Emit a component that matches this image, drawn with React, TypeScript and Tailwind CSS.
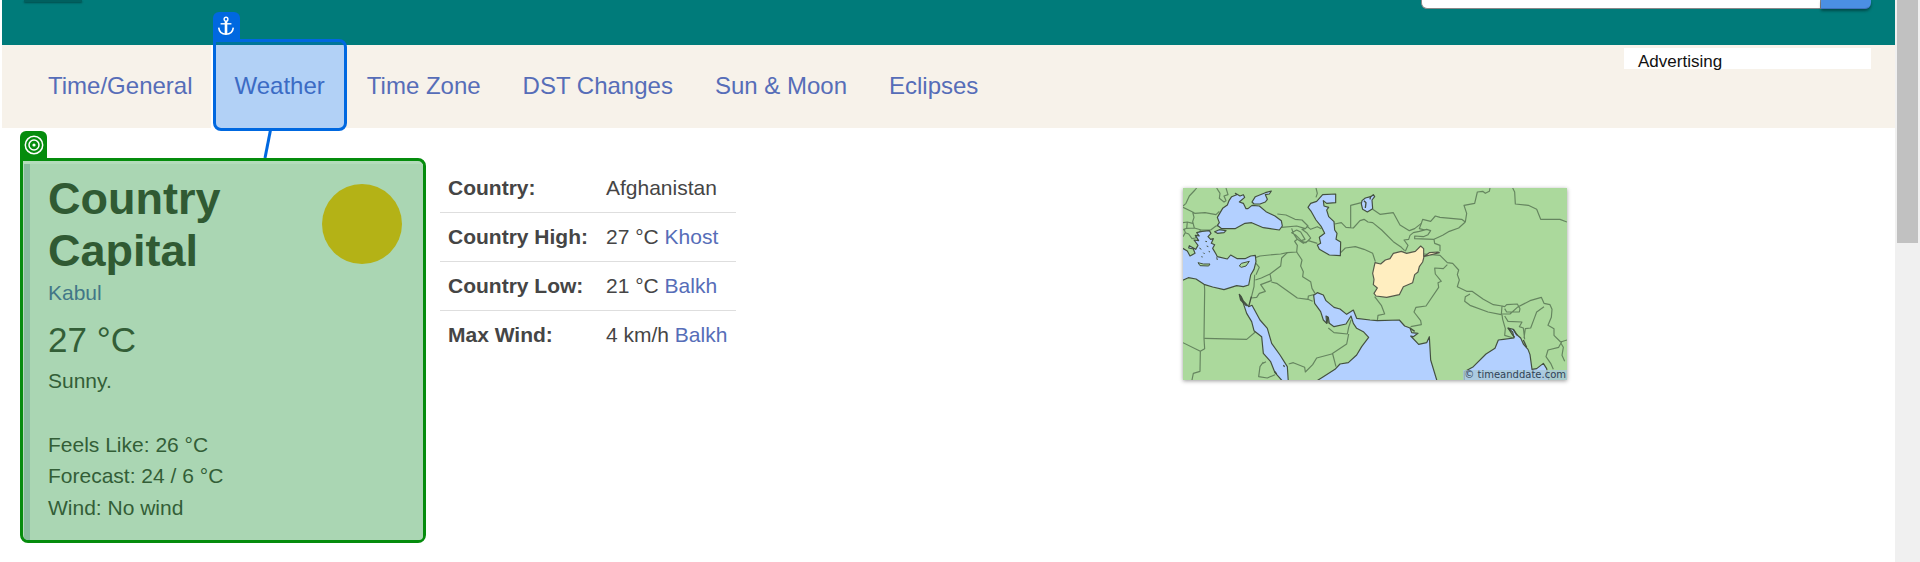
const tabs = ["Time/General", "Weather", "Time Zone", "DST Changes", "Sun & Moon", "Eclipses"];

const facts = [
  { label: "Country:", value: "Afghanistan", link: "" },
  { label: "Country High:", value: "27 °C", link: "Khost" },
  { label: "Country Low:", value: "21 °C", link: "Balkh" },
  { label: "Max Wind:", value: "4 km/h", link: "Balkh" },
];

function AnchorIcon() {
  return (
    <svg viewBox="0 0 18 20" className="h-5 w-[18px]" fill="none" stroke="white" aria-hidden="true">
      <circle cx="9" cy="3.2" r="1.9" strokeWidth="1.4" />
      <path d="M9 5v13" strokeWidth="2.6" />
      <path d="M3.6 7.8h10.8" strokeWidth="1.4" />
      <path d="M1.7 11.6C2.2 15.6 5 18.2 9 18.2s6.800-2.600 7.300-6.600" strokeWidth="1.600" />
    </svg>
  );
}

function TargetIcon() {
  return (
    <svg viewBox="0 0 20 20" className="size-5" fill="none" stroke="white" strokeWidth="1.5" aria-hidden="true">
      <circle cx="10" cy="10" r="8.700" />
      <circle cx="10" cy="10" r="5" />
      <circle cx="10" cy="10" r="1.600" fill="white" stroke="none" />
    </svg>
  );
}

function RegionMap() {
  return (
    <svg viewBox="9 24 1152 576" className="block w-full" role="img" aria-label="Location of Afghanistan">
      <rect x="9" y="24" width="1152" height="576" fill="#abd99c" />
      <g fill="none" stroke="#65855f" strokeWidth="3.500" strokeLinejoin="round">
        <path d="M9 78L18 70L28 48L45 30L50 24M9 82L38 96L44 100L75 98L108 104L118 94M110 24L120 40L118 55L132 66L138 62L132 48L144 44L138 24M38 96L42 112L38 125L43 144L64 150L92 150L108 138L116 138M9 128L22 126L38 130M9 150L20 145L43 144M9 170L16 158L26 162L36 176L46 174L62 150M22 126L20 145M16 158L12 146" />
        <path d="M408 24L412 40L408 52M292 102L318 105L345 118L366 120L384 138L376 146L350 138L305 142M335 145L340 160L352 178L344 184L352 196L350 216L322 218L302 222L268 225L240 228L228 232M335 158L350 150L362 156L375 178L364 182L348 166ZM376 146L366 148L380 158L392 174L378 188L364 184M380 138L392 148L412 140L424 146M352 178L370 190L385 182L412 190" />
        <path d="M350 216L366 240L362 258L370 275L368 290L392 305L396 325L405 340M322 218L305 234L302 258L270 282L244 294L226 300M228 250L238 262L228 284M224 284L222 320L214 352M270 282L274 302L242 314L256 334L238 340L230 352L214 354M274 306L290 310L352 354L384 358M384 358L385 348L402 344M384 358L398 364" />
        <path d="M73 314L74 330L72 475L74 506L61 514L9 488M74 475L200 478L226 456M61 514L60 574L40 580L36 600M445 444L462 458L502 462L506 442L513 420M506 462L500 492L455 522L410 534L398 554L376 576L374 562L340 548L326 552M458 522L468 560M250 546L240 560L236 590L262 594L285 584M245 552L258 545" />
        <path d="M464 132L484 128L498 142L520 144L540 122L552 118L564 126L578 128L605 150L640 185L664 202L674 212M512 143V76L544 68M482 218L496 204L526 200L552 208L578 220L586 245M578 88L600 103L640 98L660 135L688 152L704 146L724 130L728 118L752 124L766 108L780 112L845 118L856 126" />
        <path d="M856 126L836 144L808 154L788 166L762 178L704 176L704 168L730 170L744 164L752 152L740 148L718 154L700 158L690 166L686 178L672 180L684 196L676 214M724 130L718 146L735 150M762 178L764 190L780 196L780 214M856 126L860 100L852 76L884 70L892 36L908 34L916 40L928 34L930 24M998 24L1004 36L1006 72L1045 76L1070 88L1082 118L1140 118L1161 126" />
        <path d="M732 222L780 226L802 248L818 250L836 270L832 284L838 300L832 320L860 334L876 334L910 358L940 374L966 378L964 404L924 396L870 376L854 364L856 350L870 342M802 254L790 266L764 264L766 282L784 304L774 308L776 322L738 378L708 382L702 396L722 422L724 434L692 440M584 350L604 376L614 402L594 406L592 422M966 378L974 380L980 374L1012 372L1020 386L1018 396L980 396L974 386M966 402L990 402L1012 382L1050 362L1084 352L1092 370L1110 374L1116 388L1114 412L1104 436L1122 446L1122 466L1142 486L1161 480" />
        <path d="M966 404L968 418L976 446L974 466L1000 474M974 408L984 424L1026 426L1018 440L1030 444L1034 478M1092 380L1070 396L1064 412L1052 444L1036 446L1032 474M1146 484L1136 502L1104 510L1098 530L1112 550L1120 568M1142 488L1150 502L1146 526L1154 544" />
      </g>
      <g fill="#b3d0ff" stroke="#43503f" strokeWidth="3.500" strokeLinejoin="round">
        <path d="M5 203L22 213L30 228L45 220L40 207L26 204L28 197L47 208L54 196L42 180L56 182L46 166L58 168L50 158L66 154L88 152L93 160L84 170L92 178L100 176L94 190L104 194L98 205L108 222L112 230L142 237L152 225L172 236L195 236L212 228L226 226L228 245L222 268L212 285L206 315L190 320L170 317L132 329L98 321L72 313L48 297L25 293L5 302Z" />
        <path d="M104 155L118 149L138 152L132 158L112 160Z" />
        <path d="M170 44L155 50L147 62L142 75L128 85L112 112L118 128L112 136L125 146L165 146L195 130L215 128L250 143L298 150L307 138L304 122L285 108L258 95L238 78L216 76L204 86L198 86L190 70L178 66L194 52L190 44L180 48L166 40Z" />
        <path d="M216 66L226 50L256 38L274 33L268 42L256 44L262 58L256 66L240 72L222 72Z" />
        <path d="M467 42V68L440 70L430 62L432 78L446 82L440 90L446 110L462 125L464 150L471 160L468 178L482 186L481 227L448 225L418 208L412 195L422 190L418 172L434 160L424 140L408 120L394 95L384 82L392 70L410 64L428 44Z" />
        <path d="M546 62L556 54L572 50L580 44L584 50L576 60L578 86L562 96L548 88L544 72Z" />
        <path d="M178 343L184 350L190 363L206 380L216 376L225 392L240 420L262 445L275 490L300 525L322 560L325 606H310L285 578L272 545L250 520L245 470L222 452L215 425L200 400L190 370Z" />
        <path d="M401 346L412 338L430 345L438 362L462 382L480 387L500 403L520 390L530 415L570 420L592 422L658 420L674 438L690 444L695 458L714 460L700 470L692 468L716 493L740 488L748 470L752 540L772 606H405L430 590L465 568L480 552L505 548L530 525L545 500L566 472L550 455L530 445L520 430L513 408L498 432L462 440L448 430L445 412L438 408L440 430L430 420L422 395L404 370Z" />
        <path d="M853 606V575L880 560L918 522L945 505L955 480L970 478L1002 474L998 456L984 444L1000 448L1008 462L1022 474L1030 492L1044 508L1050 524L1056 568L1070 566L1090 550L1100 566L1107 606Z" />
      </g>
      <g fill="#abd99c" stroke="#43503f" strokeWidth="3" strokeLinejoin="round">
        <path d="M54 248L70 252L90 252L86 258L60 257Z" />
        <path d="M178 258L184 250L208 244L198 258L184 262Z" />
        <path d="M58 204L64 208M70 218L74 222M80 198L85 200M76 184L81 185M86 214L90 216M64 230L68 231M110 232L112 240" fill="none" />
        <path d="M552 62L558 68L556 84M572 48L570 58M178 343L182 360L200 378M206 380L214 350M442 410L444 430" fill="none" strokeWidth="4" />
        <path d="M984 444L996 462L1004 472M1000 448L1012 466M1030 480L1040 502M310 556L314 560M690 444L704 454M284 574L290 582" fill="none" strokeWidth="4" />
      </g>
      <path
        d="M585 248L602 252L616 240L630 236L640 220L664 214L680 220L706 214L722 198L731 206V230L778 218L774 216L748 218L732 230L728 246L718 260L714 276L704 284L698 308L670 320L658 344L620 352L588 348L582 340L592 324L580 314L582 298L578 280Z"
        fill="#ffeec0"
        stroke="#55594a"
        strokeWidth="3.500"
        strokeLinejoin="round"
      />
    </svg>
  );
}

export default function App() {
  return (
    <div className="flex min-h-screen bg-white font-['Liberation_Sans',Arial,sans-serif] text-[21px] leading-[31px] text-[#454545]">
      <div className="min-w-0 flex-1 pl-0.5">
        <header className="flex h-[45px] items-start justify-between bg-[#007b7a] pr-6 pl-[22px]">
          <div className="h-0.5 w-[58px] bg-[#00605f] shadow-[0_1px_2px_#004b4a]" />
          <form className="flex h-[9px] w-[450px]" onSubmit={(e) => e.preventDefault()}>
            <input
              type="search"
              aria-label="Search"
              className="min-w-0 flex-1 rounded-bl-md border border-t-0 border-[#888] bg-white outline-none"
            />
            <button
              type="submit"
              aria-label="Submit search"
              className="w-[50px] rounded-br-md border-b border-[#3f73bd] bg-[#4b8fe3] shadow-[0_2px_3px_rgba(0,0,0,0.4)]"
            />
          </form>
        </header>

        <div className="flex h-[83px] items-start justify-between bg-[#f7f2ea] pr-6 pl-[25px]">
          <nav className="flex h-full text-2xl text-[#566db8]">
            {tabs.map((tab) => (
              <div
                key={tab}
                className={
                  tab === "Weather"
                    ? "relative -ml-[3px] flex h-full items-center bg-white pr-[21px] pl-6"
                    : "flex h-full items-center px-[21px]"
                }
              >
                <a href="#" className="whitespace-nowrap pb-0.5">
                  {tab}
                </a>
                {tab === "Weather" && (
                  <div className="absolute -top-1.5 -right-px -bottom-[3px] left-0.5 z-10 rounded-lg rounded-tl-none border-[3px] border-[#0068e0] bg-[#0068e0]/30">
                    <span className="absolute -top-[30px] -left-[3px] flex h-7 w-[27px] items-center justify-center rounded-t-md bg-[#0068e0]">
                      <AnchorIcon />
                    </span>
                    <svg viewBox="0 0 10 28" className="absolute top-[88px] left-[46px] h-7 w-2.5" aria-hidden="true">
                      <path d="M8.500 0L3 28" stroke="#0068e0" strokeWidth="3" />
                    </svg>
                  </div>
                )}
              </div>
            ))}
          </nav>
          <div className="mt-[3px] h-[21px] w-[247px] bg-white pl-3.5 text-[17px] leading-[27px] text-[#111]">Advertising</div>
        </div>

        <main className="flex items-start pt-[30px] pr-6 pl-[18px]">
          <section className="relative w-[406px] shrink-0 rounded-lg rounded-tl-none border-[3px] border-[#058c0d] bg-[#b4dcbc] pt-[3px] pl-px">
            <span className="absolute -top-[30px] -left-[3px] flex h-7 w-[27px] items-center justify-center rounded-t-md bg-[#058c0d]">
              <TargetIcon />
            </span>
            <div className="rounded-b-[4px] border-l-[6px] border-[#88bc9f] bg-[#aad6b3] pt-[9px] pr-[21px] pb-[17px] pl-[18px] text-[#335e37]">
              <div className="flex items-start justify-between">
                <h2 className="min-w-0 flex-1 text-[45px] leading-[52px] font-bold text-[#305a33]">Country Capital</h2>
                <div className="mt-[11px] size-20 rounded-full bg-[#b4b216]" role="img" aria-label="Sunny" />
              </div>
              <a href="#" className="block text-[#427687]">
                Kabul
              </a>
              <p className="mt-[7px] text-[35px] leading-[50px]">27 °C</p>
              <p>Sunny.</p>
              <p className="mt-[33px]">Feels Like: 26 °C</p>
              <p>Forecast: 24 / 6 °C</p>
              <p className="pt-px">Wind: No wind</p>
            </div>
          </section>

          <div className="ml-3.5 w-[439px] shrink-0 pt-[5px]">
            <table className="border-collapse">
              <tbody>
                {facts.map((fact) => (
                  <tr key={fact.label} className="h-[49px] border-b border-[#dedede] last:border-b-0">
                    <th scope="row" className="pr-[9px] pl-2 text-left font-bold whitespace-nowrap">
                      {fact.label}
                    </th>
                    <td className="px-[9px] whitespace-nowrap">
                      {fact.value}
                      {fact.link && (
                        <>
                          {" "}
                          <a href="#" className="text-[#566db8]">
                            {fact.link}
                          </a>
                        </>
                      )}
                    </td>
                  </tr>
                ))}
              </tbody>
            </table>
          </div>

          <div className="flex flex-1 justify-center pt-[30px]">
            <a href="#" className="relative block w-96 shadow-[0_1px_4px_rgba(0,0,0,0.4)]">
              <RegionMap />
              <span className="absolute right-0 bottom-0 bg-[#a9c8d8]/80 pr-px pl-px font-['DejaVu_Sans',sans-serif] text-[10px] leading-[10px] whitespace-nowrap text-[#2f4256]">
                © timeanddate.com
              </span>
            </a>
          </div>
        </main>
      </div>

      <div className="w-[25px] shrink-0 bg-[#f0f0f0] px-0.5" aria-hidden="true">
        <div className="h-[243px] bg-[#c1c1c1]" />
      </div>
    </div>
  );
}
